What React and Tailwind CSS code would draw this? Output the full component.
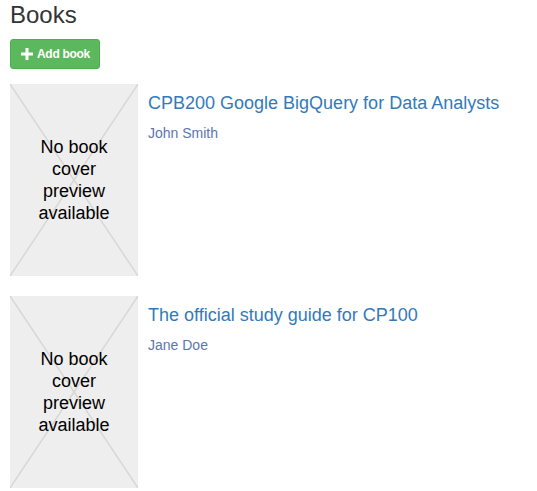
import React from "react";

const books = [
  { title: "CPB200 Google BigQuery for Data Analysts", author: "John Smith" },
  { title: "The official study guide for CP100", author: "Jane Doe" },
];

function Cover() {
  return (
    <div className="relative w-[128px] h-[192px] shrink-0 bg-[#eeeeee] flex items-center justify-center">
      <svg className="absolute inset-0 w-full h-full" viewBox="0 0 128 192" preserveAspectRatio="none">
        <line x1="0" y1="0" x2="128" y2="192" stroke="#d4d4d4" strokeWidth="1.3" />
        <line x1="128" y1="0" x2="0" y2="192" stroke="#d4d4d4" strokeWidth="1.3" />
      </svg>
      <div className="relative text-center text-[18px] leading-[22px] text-black">
        No book
        <br />
        cover
        <br />
        preview
        <br />
        available
      </div>
    </div>
  );
}

export default function App() {
  return (
    <div className="px-[10px] bg-white min-h-[491px]" style={{ fontFamily: '"Liberation Sans", Arial, sans-serif' }}>
      <h3 className="pt-[2px] text-[24px] leading-[26px] text-[#333333]">Books</h3>
      <button className="mt-[11px] h-[30px] pl-[10px] pr-[9px] flex items-center gap-[4px] rounded-[3px] bg-[#5cb85c] border border-[#4cae4c] text-white text-[12px] font-bold tracking-[-0.3px]">
        <svg width="12" height="12" viewBox="0 0 12 12">
          <path d="M4.5 0h3v4.5H12v3H7.5V12h-3V7.5H0v-3h4.5z" fill="white" />
        </svg>
        Add book
      </button>
      <div className="mt-[15px] flex flex-col gap-[20px]">
        {books.map((b) => (
          <div key={b.title} className="flex gap-[10px]">
            <Cover />
            <div className="pt-[9px]">
              <h4 className="text-[18px] leading-[20px] text-[#337ab7]">{b.title}</h4>
              <p className="mt-[10px] text-[14px] leading-[20px] text-[#5b76b0]">{b.author}</p>
            </div>
          </div>
        ))}
      </div>
    </div>
  );
}
